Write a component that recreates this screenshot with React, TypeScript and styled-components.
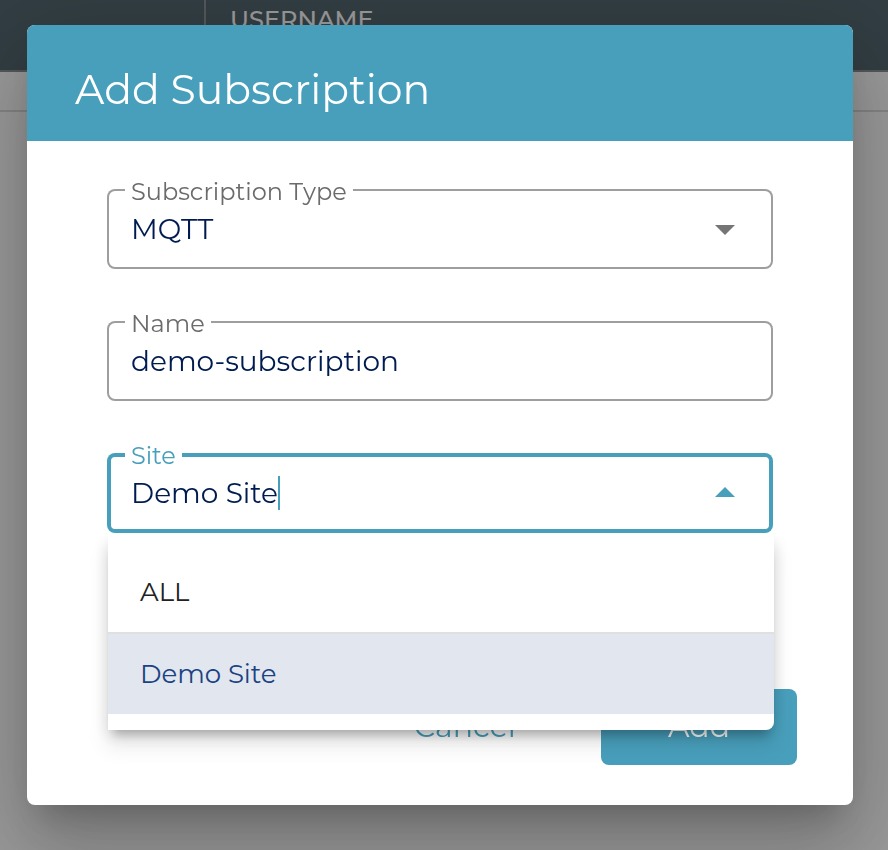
import React, { useState } from "react";
import styled, { createGlobalStyle } from "styled-components";

const accent = "#489fbc";
const navy = "#001b50";

const GlobalStyle = createGlobalStyle`
  *, *::before, *::after { box-sizing: border-box; }
  html, body { margin: 0; min-height: 100%; background: #fff; }
  body, button, input, select {
    font-family: Montserrat, Inter, "Open Sans", sans-serif;
    font-weight: 400;
  }
`;

const Table = styled.table`
  width: 100%;
  table-layout: fixed;
  border-collapse: separate;
  border-spacing: 0;
`;

const HeadCell = styled.th<{ $narrow?: boolean }>`
  width: ${(p) => (p.$narrow ? "206px" : "auto")};
  height: 72px;
  padding: 8px 24px;
  background: #546770;
  border-bottom: 2px solid #8c9295;
  border-right: ${(p) => (p.$narrow ? "2px solid #8c9295" : "0")};
  color: #fff;
  font-size: 24px;
  font-weight: 500;
  line-height: 24px;
  text-align: left;
  vertical-align: top;
`;

const Cell = styled.td`
  height: 40px;
  padding: 0;
  border-bottom: 2px solid #dcdcdc;
`;

const Backdrop = styled.div`
  position: fixed;
  inset: 0;
  display: flex;
  align-items: flex-start;
  padding: 25px 35px 45px 27px;
  background: rgba(0, 0, 0, 0.4);
`;

const Dialog = styled.form`
  flex: 1;
  border-radius: 8px;
  background: #fff;
  box-shadow:
    0 22px 30px -14px rgba(0, 0, 0, 0.2),
    0 48px 76px 6px rgba(0, 0, 0, 0.14),
    0 18px 92px 16px rgba(0, 0, 0, 0.12);
`;

const DialogHeader = styled.header`
  padding: 40px 48px 28px;
  border-radius: 8px 8px 0 0;
  background: ${accent};
`;

const Title = styled.h1`
  margin: 0;
  color: #fff;
  font-size: 41px;
  font-weight: 400;
  line-height: 48px;
`;

const Fields = styled.div`
  display: flex;
  flex-direction: column;
  gap: 52px;
  padding: 48px 80px 0;
`;

const Field = styled.div<{ $active?: boolean }>`
  position: relative;
  display: flex;
  align-items: center;
  height: 80px;
  padding: 0 36px 0 24px;
  border-radius: 8px;
  box-shadow: inset 0 0 0 ${(p) => (p.$active ? "4px" : "2px")}
    ${(p) => (p.$active ? accent : "#9e9e9e")};
`;

const FieldLabel = styled.label<{ $active?: boolean }>`
  position: absolute;
  top: -11px;
  left: 18px;
  padding: 0 6px;
  background: #fff;
  color: ${(p) => (p.$active ? accent : "#6b6b6b")};
  font-size: 24px;
  line-height: 28px;
`;

const controlStyle = `
  height: 36px;
  margin: 0;
  padding: 0;
  border: 0;
  outline: 0;
  background: transparent;
  color: ${navy};
  font-size: 28px;
  line-height: 36px;
`;

const Select = styled.select`
  ${controlStyle}
  flex: 1;
  appearance: none;
`;

const TextInput = styled.input`
  ${controlStyle}
  flex: 1;
  min-width: 0;
`;

const ComboInput = styled.input`
  ${controlStyle}
  field-sizing: content;
  caret-color: transparent;
`;

const Caret = styled.span`
  width: 2px;
  height: 34px;
  margin-right: auto;
  background: ${accent};
`;

const Arrow = styled.svg`
  width: 24px;
  height: 12px;
  pointer-events: none;
`;

const Menu = styled.ul`
  position: absolute;
  z-index: 1;
  top: calc(100% + 3px);
  left: 1px;
  right: -1px;
  margin: 0;
  padding: 16px 0;
  border-radius: 0 0 8px 0;
  background: #fff;
  box-shadow:
    0 10px 10px -6px rgba(0, 0, 0, 0.2),
    0 16px 20px 2px rgba(0, 0, 0, 0.08),
    0 6px 16px 0 rgba(0, 0, 0, 0.14);
  clip-path: inset(0 -40px -60px -40px);
  list-style: none;
`;

const Option = styled.li<{ $selected?: boolean }>`
  padding: 24px 32px;
  background: ${(p) => (p.$selected ? "#e2e6ee" : "#fff")};
  color: ${(p) => (p.$selected ? "#194383" : "#212121")};
  font-size: 26px;
  line-height: 32px;
  cursor: pointer;

  & + & {
    border-top: 2px solid #e0e0e0;
  }
`;

const Actions = styled.footer`
  display: flex;
  justify-content: flex-end;
  gap: 38px;
  padding: 156px 56px 40px;
`;

const Button = styled.button<{ $primary?: boolean }>`
  width: 196px;
  height: 76px;
  padding: 0;
  border: 0;
  border-radius: 8px;
  background: ${(p) => (p.$primary ? accent : "transparent")};
  color: ${(p) => (p.$primary ? "#fff" : accent)};
  font-size: 30px;
  line-height: 36px;
`;

const sites = ["ALL", "Demo Site"];

export default function App() {
  const [name, setName] = useState("demo-subscription");
  const [site, setSite] = useState("Demo Site");

  return (
    <>
      <GlobalStyle />
      <Table>
        <thead>
          <tr>
            <HeadCell $narrow />
            <HeadCell>USERNAME</HeadCell>
          </tr>
        </thead>
        <tbody>
          <tr>
            <Cell colSpan={2} />
          </tr>
        </tbody>
      </Table>
      <Backdrop>
        <Dialog role="dialog" aria-labelledby="dialog-title" onSubmit={(e) => e.preventDefault()}>
          <DialogHeader>
            <Title id="dialog-title">Add Subscription</Title>
          </DialogHeader>
          <Fields>
            <Field>
              <FieldLabel htmlFor="type">Subscription Type</FieldLabel>
              <Select id="type" defaultValue="MQTT">
                <option>MQTT</option>
              </Select>
              <Arrow viewBox="0 0 24 12" aria-hidden="true">
                <path d="M2 2h20L12 12z" fill="#757575" />
              </Arrow>
            </Field>
            <Field>
              <FieldLabel htmlFor="name">Name</FieldLabel>
              <TextInput id="name" value={name} onChange={(e) => setName(e.target.value)} />
            </Field>
            <Field $active>
              <FieldLabel htmlFor="site" $active>Site</FieldLabel>
              <ComboInput
                id="site"
                role="combobox"
                aria-expanded="true"
                aria-controls="site-menu"
                value={site}
                onChange={(e) => setSite(e.target.value)}
              />
              <Caret />
              <Arrow viewBox="0 0 24 12" aria-hidden="true">
                <path d="M2 10h20L12 0z" fill={accent} />
              </Arrow>
              <Menu id="site-menu" role="listbox">
                {sites.map((s) => (
                  <Option
                    key={s}
                    role="option"
                    aria-selected={s === site}
                    $selected={s === site}
                    onClick={() => setSite(s)}
                  >
                    {s}
                  </Option>
                ))}
              </Menu>
            </Field>
          </Fields>
          <Actions>
            <Button type="button">Cancel</Button>
            <Button type="submit" $primary>Add</Button>
          </Actions>
        </Dialog>
      </Backdrop>
    </>
  );
}
